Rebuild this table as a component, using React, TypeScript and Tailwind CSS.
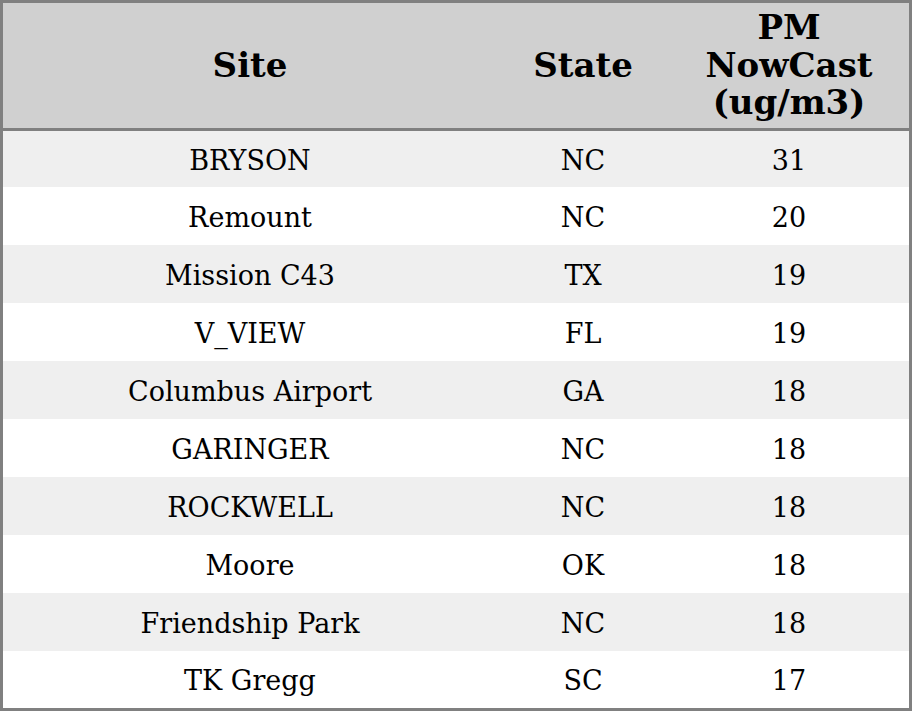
const rows = [
  { site: 'BRYSON', state: 'NC', pm: 31 },
  { site: 'Remount', state: 'NC', pm: 20 },
  { site: 'Mission C43', state: 'TX', pm: 19 },
  { site: 'V_VIEW', state: 'FL', pm: 19 },
  { site: 'Columbus Airport', state: 'GA', pm: 18 },
  { site: 'GARINGER', state: 'NC', pm: 18 },
  { site: 'ROCKWELL', state: 'NC', pm: 18 },
  { site: 'Moore', state: 'OK', pm: 18 },
  { site: 'Friendship Park', state: 'NC', pm: 18 },
  { site: 'TK Gregg', state: 'SC', pm: 17 },
];

// row heights in the capture aren't perfectly even
const heights = ['h-[56px]', 'h-[58px]', 'h-[58px]', 'h-[58px]', 'h-[58px]', 'h-[58px]', 'h-[58px]', 'h-[58px]', 'h-[58px]', 'h-[57px]'];

export default function App() {
  return (
    <div className="w-[912px] h-[711px] bg-white font-['DejaVu_Serif',serif] text-black">
      <div className="border-[3px] border-[#808080] flex flex-col">
        {/* Header */}
        <div className="flex h-[128px] bg-[#d0d0d0] border-b-[3px] border-[#808080] font-bold text-[34px] leading-[37.5px]">
          <div className="w-[494px] flex items-center justify-center">Site</div>
          <div className="w-[172px] flex items-center justify-center">State</div>
          <div className="flex-1 flex items-center justify-center text-center">
            PM<br />NowCast<br />(ug/m3)
          </div>
        </div>

        {/* Body */}
        {rows.map((row, i) => (
          <div
            key={row.site}
            className={`flex items-center pt-[4px] text-[27px] ${heights[i]} ${i % 2 === 0 ? 'bg-[#efefef]' : 'bg-white'}`}
          >
            <div className="w-[494px] text-center">{row.site}</div>
            <div className="w-[172px] text-center">{row.state}</div>
            <div className="flex-1 text-center">{row.pm}</div>
          </div>
        ))}
      </div>
    </div>
  );
}
